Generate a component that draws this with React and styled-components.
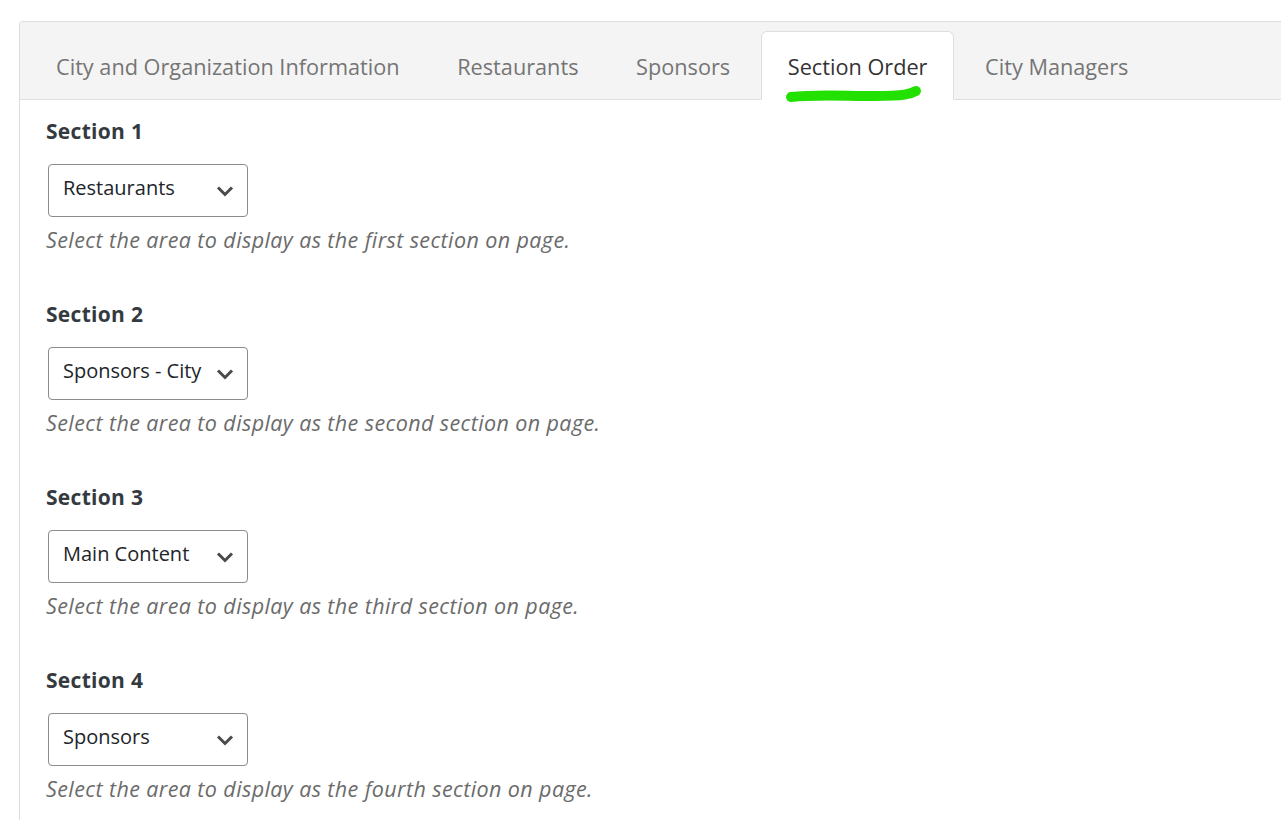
import React from "react";
import styled, { createGlobalStyle } from "styled-components";

const GlobalStyle = createGlobalStyle`
  html, body {
    margin: 0;
    padding: 0;
    background: #fff;
    font-family: "Open Sans", "Noto Sans", sans-serif;
  }
`;

const tabs = [
  "City and Organization Information",
  "Restaurants",
  "Sponsors",
  "Section Order",
  "City Managers",
];

const sections = [
  { value: "Restaurants", ordinal: "first" },
  { value: "Sponsors - City", ordinal: "second" },
  { value: "Main Content", ordinal: "third" },
  { value: "Sponsors", ordinal: "fourth" },
];

const options = ["Restaurants", "Sponsors - City", "Main Content", "Sponsors"];

const App = () => {
  return (
    <Page>
      <GlobalStyle />
      <Card>
        <TabBar>
          {tabs.map((tab) => (
            <Tab key={tab} active={tab === "Section Order"}>
              {tab}
              {tab === "Section Order" && (
                <Marker viewBox="0 0 140 20" width="140" height="20">
                  <path
                    d="M6 13 C 30 10, 60 12, 90 12 S 125 10, 131 7"
                    fill="none"
                    stroke="#22e000"
                    strokeWidth="10"
                    strokeLinecap="round"
                  />
                </Marker>
              )}
            </Tab>
          ))}
        </TabBar>
        <Body>
          {sections.map((s, i) => (
            <Field key={s.ordinal}>
              <Label>Section {i + 1}</Label>
              <SelectWrap>
                <Select defaultValue={s.value}>
                  {options.map((o) => (
                    <option key={o}>{o}</option>
                  ))}
                </Select>
                <Chevron viewBox="0 0 18 12" width="18" height="12">
                  <path
                    d="M2 2.5 L9 9.5 L16 2.5"
                    fill="none"
                    stroke="currentColor"
                    strokeWidth="3"
                  />
                </Chevron>
              </SelectWrap>
              <Help>
                Select the area to display as the {s.ordinal} section on page.
              </Help>
            </Field>
          ))}
        </Body>
      </Card>
    </Page>
  );
};

const Page = styled.div`
  padding: 21px 0 0 19px;
  height: 799px;
  overflow: hidden;
`;

const Card = styled.div`
  border: 1px solid #dedede;
  border-right: none;
  border-radius: 4px 0 0 0;
  min-height: 820px;
`;

const TabBar = styled.ul`
  display: flex;
  align-items: flex-end;
  gap: 3.6px;
  margin: 0;
  padding: 10px 0 0 9px;
  height: 67px;
  list-style: none;
  background: #f4f4f4;
  border-bottom: 1px solid #dedede;
  border-radius: 4px 0 0 0;
`;

const Tab = styled.li`
  position: relative;
  display: flex;
  align-items: center;
  box-sizing: border-box;
  height: 69px;
  margin-bottom: -1px;
  padding: 2px 26px 0 26px;
  font-size: 21.7px;
  color: ${(p) => (p.active ? "#333" : "#757575")};
  background: ${(p) => (p.active ? "#fff" : "transparent")};
  border: 1px solid ${(p) => (p.active ? "#dedede" : "transparent")};
  border-bottom: 1px solid ${(p) => (p.active ? "#fff" : "transparent")};
  border-radius: 6px 6px 0 0;
  white-space: nowrap;
`;

const Marker = styled.svg`
  position: absolute;
  left: 23px;
  top: 52px;
`;

const Body = styled.div`
  padding: 16px 0 0 28px;
`;

const Field = styled.div`
  margin-bottom: 44px;
`;

const Label = styled.div`
  font-size: 21px;
  font-weight: 700;
  letter-spacing: 0.3px;
  line-height: 30px;
  color: #343a40;
  margin-left: -2px;
  margin-bottom: 18px;
`;

const SelectWrap = styled.div`
  position: relative;
  width: 200px;
  height: 53px;
`;

const Select = styled.select`
  appearance: none;
  box-sizing: border-box;
  width: 200px;
  height: 53px;
  padding: 0 32px 6px 14px;
  border: 1px solid #8c8c8c;
  border-radius: 4px;
  background: #fff;
  font-family: inherit;
  font-size: 20px;
  color: #212529;
  outline: none;
`;

const Chevron = styled.svg`
  position: absolute;
  right: 14px;
  top: 21px;
  color: #4a4a4a;
  pointer-events: none;
`;

const Help = styled.div`
  margin: 8px 0 0 -2px;
  font-size: 21.5px;
  font-style: italic;
  letter-spacing: 0.4px;
  line-height: 30px;
  color: #6b6b6b;
`;

export default App;
